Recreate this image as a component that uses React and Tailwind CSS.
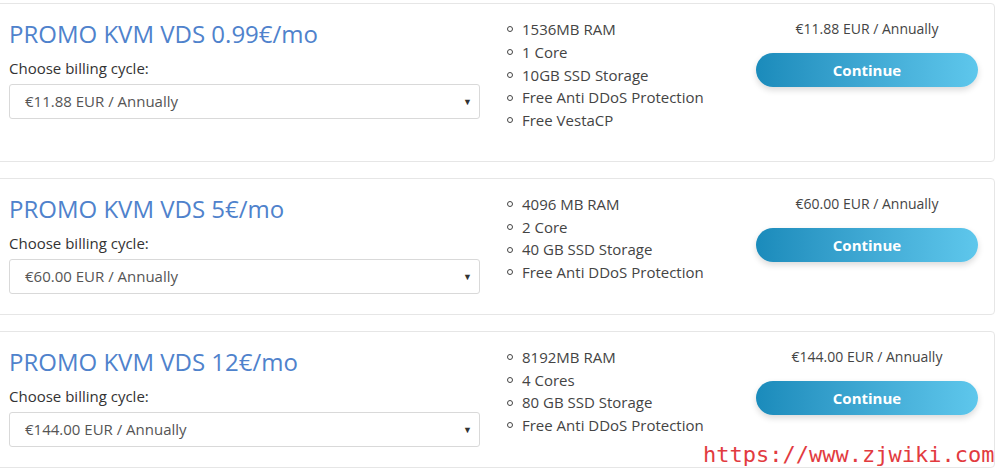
import React from 'react';

const plans = [
  {
    name: 'PROMO KVM VDS 0.99€/mo',
    price: '€11.88 EUR / Annually',
    features: ['1536MB RAM', '1 Core', '10GB SSD Storage', 'Free Anti DDoS Protection', 'Free VestaCP'],
  },
  {
    name: 'PROMO KVM VDS 5€/mo',
    price: '€60.00 EUR / Annually',
    features: ['4096 MB RAM', '2 Core', '40 GB SSD Storage', 'Free Anti DDoS Protection'],
  },
  {
    name: 'PROMO KVM VDS 12€/mo',
    price: '€144.00 EUR / Annually',
    features: ['8192MB RAM', '4 Cores', '80 GB SSD Storage', 'Free Anti DDoS Protection'],
  },
];

const PlanCard = ({ plan }) => (
  <div className="ml-[-5px] w-[1000px] flex items-start bg-white border border-[#e6e6e6] rounded-[4px] pt-[14px]">
    {/* name + billing select */}
    <div className="w-[484px] pl-[13px] pb-[20px]">
      <h3 className="text-[24px] leading-[28px] text-[#4f82cc] mt-[2px]">{plan.name}</h3>
      <div className="text-[15px] leading-[20px] text-[#333] mt-[10px]">Choose billing cycle:</div>
      <div className="mt-[6px] h-[35px] w-[471px] border border-[#d9d9d9] rounded-[3px] flex items-center justify-between pl-[15px] pr-[7px] text-[15px] text-[#555]">
        <span>{plan.price}</span>
        <span className="text-[9px] text-[#333]">▼</span>
      </div>
    </div>

    {/* features */}
    <ul className="flex-1 pl-[27px] pb-[29px]">
      {plan.features.map((f) => (
        <li key={f} className="flex items-center h-[22.75px] text-[15px] text-[#444]">
          <span className="w-[6px] h-[6px] rounded-full border-[1.5px] border-[#444] mr-[9px]" />
          {f}
        </li>
      ))}
    </ul>

    {/* order */}
    <div className="w-[222px] mr-[16px] flex flex-col items-center pt-[1px]">
      <div className="text-[14px] leading-[20px] text-[#444]">{plan.price}</div>
      <button className="mt-[14px] w-[222px] h-[34px] rounded-full bg-gradient-to-r from-[#1a8bbb] to-[#5ec7ec] text-white font-bold text-[15px] shadow-[0_3px_6px_rgba(0,0,0,0.15)]">
        Continue
      </button>
    </div>
  </div>
);

export default function App() {
  return (
    <div
      className="relative w-[1000px] h-[475px] overflow-hidden bg-white pt-[3px] flex flex-col gap-[16px]"
      style={{ fontFamily: '"Open Sans", "Liberation Sans", sans-serif' }}
    >
      {plans.map((p) => (
        <PlanCard key={p.name} plan={p} />
      ))}

      <div
        className="absolute left-[703px] top-[441px] text-[22px] leading-[28px] text-[#e23b3f]"
        style={{ fontFamily: '"DejaVu Sans Mono", monospace' }}
      >
        https://www.zjwiki.com
      </div>
    </div>
  );
}
